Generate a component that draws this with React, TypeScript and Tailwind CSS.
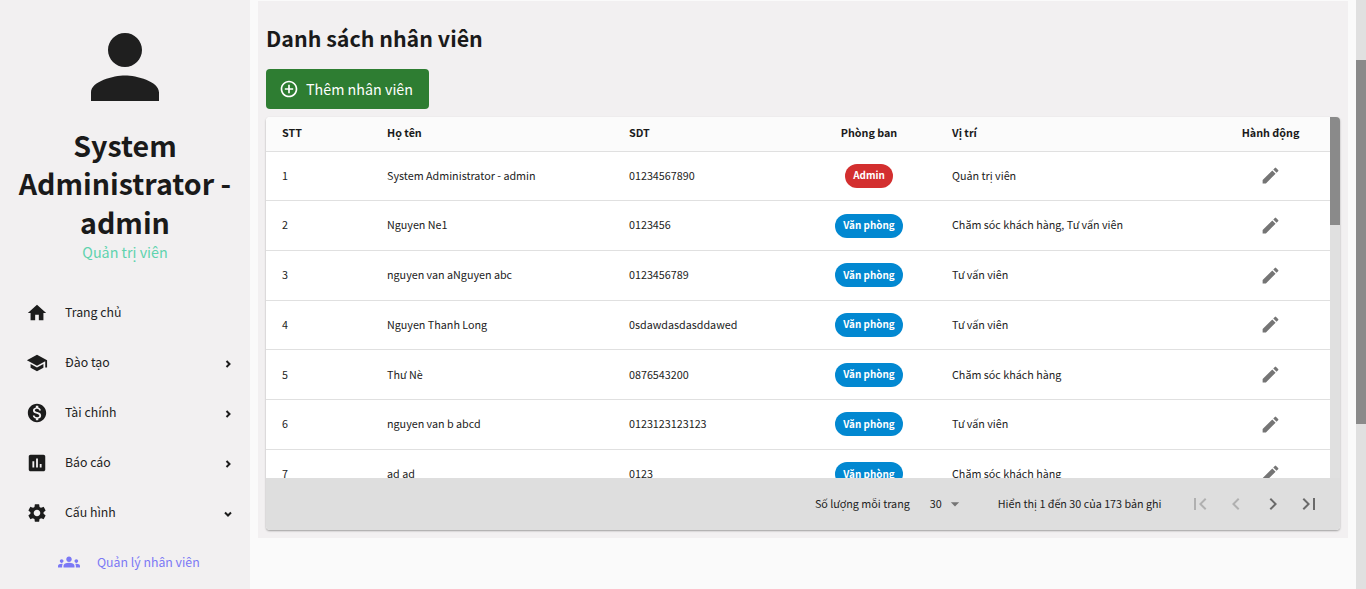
import { ReactNode } from "react";
import {
  MdAddCircleOutline,
  MdArrowDropDown,
  MdAssessment,
  MdChevronLeft,
  MdChevronRight,
  MdEdit,
  MdFirstPage,
  MdGroups,
  MdHome,
  MdLastPage,
  MdMonetizationOn,
  MdPerson,
  MdSchool,
  MdSettings,
} from "react-icons/md";

const font = "font-['Noto_Sans_CJK_SC','Noto_Sans',sans-serif]";

const rows = [
  { id: 1, name: "System Administrator - admin", phone: "01234567890", dept: "Admin", role: "Quản trị viên" },
  { id: 2, name: "Nguyen Ne1", phone: "0123456", dept: "Văn phòng", role: "Chăm sóc khách hàng, Tư vấn viên" },
  { id: 3, name: "nguyen van aNguyen abc", phone: "0123456789", dept: "Văn phòng", role: "Tư vấn viên" },
  { id: 4, name: "Nguyen Thanh Long", phone: "0sdawdasdasddawed", dept: "Văn phòng", role: "Tư vấn viên" },
  { id: 5, name: "Thư Nè", phone: "0876543200", dept: "Văn phòng", role: "Chăm sóc khách hàng" },
  { id: 6, name: "nguyen van b abcd", phone: "0123123123123", dept: "Văn phòng", role: "Tư vấn viên" },
  { id: 7, name: "ad ad", phone: "0123", dept: "Văn phòng", role: "Chăm sóc khách hàng" },
];

function Caret({ down }: { down?: boolean }) {
  return (
    <svg width="12" height="12" viewBox="0 0 12 12" className="mt-[3px] text-[#1c1c1c]">
      <path
        d={down ? "M3 4.5 6 7.5 9 4.5" : "M4.5 3 7.5 6 4.5 9"}
        fill="none"
        stroke="currentColor"
        strokeWidth="2"
      />
    </svg>
  );
}

function NavItem({ icon, label, arrow }: { icon: ReactNode; label: string; arrow?: "right" | "down" }) {
  return (
    <div className="flex h-[50px] items-center pl-[26px] pr-[16px]">
      <span className="mt-px flex w-[39px] text-[#1c1c1c]">{icon}</span>
      <span className="flex-1 text-[12.3px] text-[#222]">{label}</span>
      {arrow && <Caret down={arrow === "down"} />}
    </div>
  );
}

function Sidebar() {
  return (
    <aside className="flex h-full w-[250px] shrink-0 flex-col bg-[#f2f0f1]">
      <div className="flex flex-col items-center px-[10px] pt-[16px]">
        <MdPerson size={102} className="text-[#1f1f1f]" />
        <h2 className="mt-[8px] text-center text-[28.6px] leading-[38.4px] font-semibold text-[#1a1a1a]">
          System Administrator - admin
        </h2>
        <p className="mt-[1px] text-[14.3px] leading-[20px] text-[#5fd3ae]">Quản trị viên</p>
      </div>
      <nav className="mt-[25px]">
        <NavItem icon={<MdHome size={22} />} label="Trang chủ" />
        <NavItem icon={<MdSchool size={22} />} label="Đào tạo" arrow="right" />
        <NavItem icon={<MdMonetizationOn size={22} />} label="Tài chính" arrow="right" />
        <NavItem icon={<MdAssessment size={22} />} label="Báo cáo" arrow="right" />
        <NavItem icon={<MdSettings size={22} />} label="Cấu hình" arrow="down" />
        <div className="flex h-[50px] items-center pl-[58px] text-[#7b78f5]">
          <MdGroups size={22} />
          <span className="ml-[17px] text-[12.3px]">Quản lý nhân viên</span>
        </div>
      </nav>
    </aside>
  );
}

function DeptBadge({ dept }: { dept: string }) {
  const color = dept === "Admin" ? "bg-[#d32f2f]" : "bg-[#0288d1]";
  return (
    <span className={`${color} inline-flex h-6 items-center rounded-full px-2 text-[9.9px] font-bold text-white`}>
      {dept}
    </span>
  );
}

function EmployeeTable() {
  return (
    <div className="overflow-hidden rounded bg-white shadow-[0_1px_2px_rgba(0,0,0,0.35)]">
      <div className="flex h-[361px]">
        <div className="w-[1064px] overflow-hidden">
          <table className="w-[1064px] table-fixed border-collapse text-[10.75px] text-[#222]">
            <colgroup>
              <col className="w-[105px]" />
              <col className="w-[242px]" />
              <col className="w-[189px]" />
              <col className="w-[134px]" />
              <col className="w-[275px]" />
              <col className="w-[119px]" />
            </colgroup>
            <thead>
              <tr className="h-[34px] border-b border-[#e0e0e0] bg-[#fbfbfb] text-left font-bold text-[#1a1a1a]">
                <th className="pb-[2px] pl-4">STT</th>
                <th className="pb-[2px] pl-4">Họ tên</th>
                <th className="pb-[2px] pl-4">SDT</th>
                <th className="pb-[2px] text-center">Phòng ban</th>
                <th className="pb-[2px] pl-4">Vị trí</th>
                <th className="pb-[2px] text-center">Hành động</th>
              </tr>
            </thead>
            <tbody>
              {rows.map((r) => (
                <tr key={r.id} className="h-[49.7px] border-b border-[#e0e0e0]">
                  <td className="pl-4">{r.id}</td>
                  <td className="pl-4">{r.name}</td>
                  <td className="pl-4">{r.phone}</td>
                  <td className="text-center">
                    <DeptBadge dept={r.dept} />
                  </td>
                  <td className="pl-4">{r.role}</td>
                  <td>
                    <MdEdit size={21} className="mx-auto text-[#757575]" />
                  </td>
                </tr>
              ))}
            </tbody>
          </table>
        </div>
        <div className="w-[10px] bg-[#e0e0e0]">
          <div className="h-[108px] bg-[#8a8a8a]" />
        </div>
      </div>
      <div className="flex h-[52px] items-center justify-end bg-[#dedede] pr-[19px] text-[10.75px] text-[#222]">
        <span>Số lượng mỗi trang</span>
        <span className="ml-[20px]">30</span>
        <MdArrowDropDown size={20} className="ml-[3px] text-[#757575]" />
        <span className="ml-[33px]">Hiển thị 1 đến 30 của 173 bản ghi</span>
        <div className="ml-[26px] flex gap-[12.5px]">
          <MdFirstPage size={24} className="text-[#b0b0b0]" />
          <MdChevronLeft size={24} className="text-[#b0b0b0]" />
          <MdChevronRight size={24} className="text-[#6a6a6a]" />
          <MdLastPage size={24} className="text-[#6a6a6a]" />
        </div>
      </div>
    </div>
  );
}

export default function App() {
  return (
    <div className={`${font} flex h-[589px] w-[1366px] overflow-hidden bg-[#fafafa]`}>
      <Sidebar />
      <main className="flex-1 pt-px pl-2 pr-2">
        <div className="h-[537px] bg-[#f2f0f1] px-2">
          <h1 className="pt-[20px] text-[21.4px] leading-[34px] font-bold text-[#1a1a1a]">Danh sách nhân viên</h1>
          <button className="mt-[14px] mb-[8px] flex h-10 w-[163px] items-center rounded bg-[#2e7d32] pl-[13px] text-[14.3px] text-white">
            <MdAddCircleOutline size={20} className="mr-[7px]" />
            Thêm nhân viên
          </button>
          <EmployeeTable />
        </div>
      </main>
      <div className="w-[10px] shrink-0 bg-[#e0e0e0]">
        <div className="mt-[60px] h-[364px] bg-[#8a8a8a]" />
      </div>
    </div>
  );
}
